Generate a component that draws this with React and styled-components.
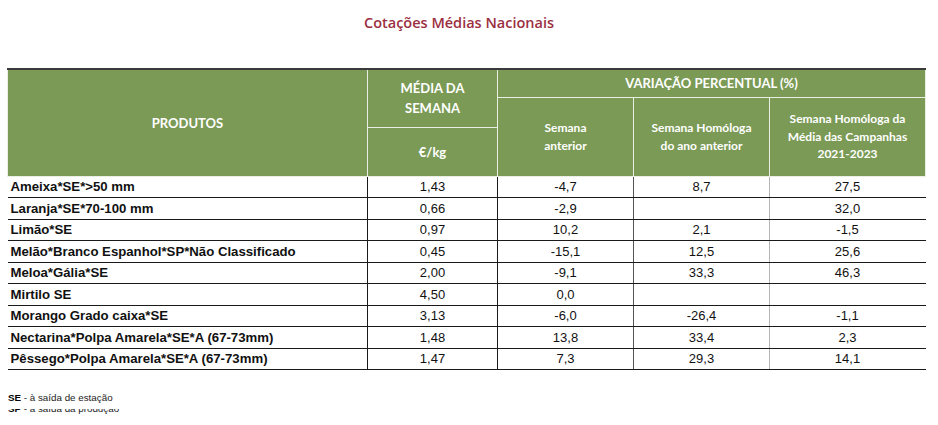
import React from "react";
import styled, { createGlobalStyle } from "styled-components";

const GlobalStyle = createGlobalStyle`
  html, body {
    margin: 0;
    padding: 0;
    background: #ffffff;
  }
`;

const Page = styled.div`
  width: 938px;
  height: 425px;
  overflow: hidden;
  display: flex;
  flex-direction: column;
`;

const Title = styled.h1`
  margin: 13px 0 0;
  padding-right: 20px;
  height: 20px;
  text-align: center;
  font-family: "Open Sans", sans-serif;
  font-weight: 600;
  font-size: 14.5px;
  color: #9b2f3f;
`;

const Table = styled.table`
  margin: 35px 0 0 7px;
  width: 918px;
  border-collapse: collapse;
  table-layout: fixed;
  border-top: 2px solid #3a3a3a;
`;

const HeadRow = styled.tr`
  height: ${(p) => p.$h}px;
`;

const Head = styled.th`
  background: #7a9a55;
  color: #ffffff;
  font-family: Lato, "Open Sans", sans-serif;
  font-weight: 700;
  font-size: ${(p) => (p.$small ? "12px" : "13px")};
  line-height: ${(p) => (p.$small ? "17.5px" : "20px")};
  text-align: center;
  vertical-align: middle;
  padding: 0;
  border: 1.5px solid #e9efe2;
  border-top: none;
`;

const BodyRow = styled.tr`
  height: 21.5px;
`;

const Cell = styled.td`
  padding: 0 ${(p) => (p.$name ? "3px" : "0")};
  line-height: 15px;
  font-family: "Liberation Sans", Arial, sans-serif;
  font-size: ${(p) => (p.$name ? "13.2px" : "13px")};
  font-weight: ${(p) => (p.$name ? 700 : 400)};
  color: #111111;
  text-align: ${(p) => (p.$name ? "left" : "center")};
  white-space: nowrap;
  border-bottom: 1px solid #1a1a1a;
  border-right: 1px solid ${(p) => p.$line || "#1a1a1a"};
`;

const Footer = styled.div`
  margin: 22px 0 0 8px;
  font-family: "Liberation Sans", Arial, sans-serif;
  font-size: 9.8px;
  color: #222222;
  display: flex;
  flex-direction: column;
`;

const Note = styled.div`
  line-height: 11px;
  padding-bottom: ${(p) => (p.$covered ? 0 : 6)}px;
  margin-top: ${(p) => (p.$covered ? -6 : 0)}px;
  background: #ffffff;
  position: relative;
  z-index: ${(p) => (p.$covered ? 0 : 1)};
  b {
    font-weight: 700;
    color: #000;
  }
`;

const rows = [
  ["Ameixa*SE*>50 mm", "1,43", "-4,7", "8,7", "27,5"],
  ["Laranja*SE*70-100 mm", "0,66", "-2,9", "", "32,0"],
  ["Limão*SE", "0,97", "10,2", "2,1", "-1,5"],
  ["Melão*Branco Espanhol*SP*Não Classificado", "0,45", "-15,1", "12,5", "25,6"],
  ["Meloa*Gália*SE", "2,00", "-9,1", "33,3", "46,3"],
  ["Mirtilo SE", "4,50", "0,0", "", ""],
  ["Morango Grado caixa*SE", "3,13", "-6,0", "-26,4", "-1,1"],
  ["Nectarina*Polpa Amarela*SE*A (67-73mm)", "1,48", "13,8", "33,4", "2,3"],
  ["Pêssego*Polpa Amarela*SE*A (67-73mm)", "1,47", "7,3", "29,3", "14,1"],
];

export default function App() {
  return (
    <Page>
      <GlobalStyle />
      <Title>Cotações Médias Nacionais</Title>
      <Table>
        <colgroup>
          <col style={{ width: 360 }} />
          <col style={{ width: 130 }} />
          <col style={{ width: 136 }} />
          <col style={{ width: 136 }} />
          <col style={{ width: 156 }} />
        </colgroup>
        <thead>
          <HeadRow $h={28}>
            <Head rowSpan={3}>PRODUTOS</Head>
            <Head rowSpan={2}>
              MÉDIA DA
              <br />
              SEMANA
            </Head>
            <Head colSpan={3}>VARIAÇÃO PERCENTUAL (%)</Head>
          </HeadRow>
          <HeadRow $h={30}>
            <Head rowSpan={2} $small>
              Semana
              <br />
              anterior
            </Head>
            <Head rowSpan={2} $small>
              Semana Homóloga
              <br />
              do ano anterior
            </Head>
            <Head rowSpan={2} $small>
              Semana Homóloga da
              <br />
              Média das Campanhas
              <br />
              2021-2023
            </Head>
          </HeadRow>
          <HeadRow $h={49}>
            <Head>€/kg</Head>
          </HeadRow>
        </thead>
        <tbody>
          {rows.map((r) => (
            <BodyRow key={r[0]}>
              <Cell $name>{r[0]}</Cell>
              <Cell>{r[1]}</Cell>
              <Cell $line="#555555">{r[2]}</Cell>
              <Cell $line="#b5b5b5">{r[3]}</Cell>
              <Cell $line="transparent">{r[4]}</Cell>
            </BodyRow>
          ))}
        </tbody>
      </Table>
      <Footer>
        <Note>
          <b>SE</b> - à saída de estação
        </Note>
        <Note $covered>
          <b>SP</b> - à saída da produção
        </Note>
      </Footer>
    </Page>
  );
}
